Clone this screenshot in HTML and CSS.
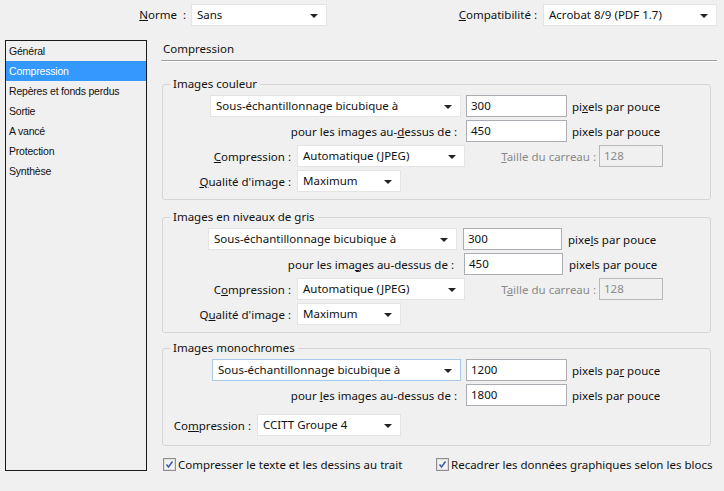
FILE: index.html
```html
<!DOCTYPE html>
<html lang="fr">
<head>
<meta charset="utf-8">
<title>Compression</title>
<link rel="stylesheet" href="styles.css">
</head>
<body>
<div class="topbar">
  <span class="lbl lbl-norme"><u>N</u>orme&nbsp; :</span>
  <div class="select sel-norme">Sans<span class="arrow"></span></div>
  <span class="lbl lbl-compat"><u>C</u>ompatibilité :</span>
  <div class="select sel-compat">Acrobat 8/9 (PDF 1.7)<span class="arrow"></span></div>
</div>
<div class="main">
  <ul class="sidebar">
    <li>Général</li>
    <li class="active">Compression</li>
    <li>Repères et fonds perdus</li>
    <li>Sortie</li>
    <li>A vancé</li>
    <li>Protection</li>
    <li>Synthèse</li>
  </ul>
  <div class="panel">
    <div class="panel-title">Compression</div>

    <fieldset class="group g1">
      <legend>Images couleur</legend>
      <div class="row r1">
        <div class="select sel-sample">Sous-échantillonnage bicubique à<span class="arrow"></span></div>
        <div class="input">300</div>
        <span class="unit">pi<u>x</u>els par pouce</span>
      </div>
      <div class="row r2">
        <span class="rlabel">pour les images au-<u>d</u>essus de :</span>
        <div class="input">450</div>
        <span class="unit">pixels par pouce</span>
      </div>
      <div class="row r3">
        <span class="flabel"><u>C</u>ompression :</span>
        <div class="select sel-comp">Automatique (JPEG)<span class="arrow"></span></div>
        <span class="dlabel"><u>T</u>aille du carreau :</span>
        <div class="input disabled">128</div>
      </div>
      <div class="row r4">
        <span class="flabel"><u>Q</u>ualité d'image :</span>
        <div class="select sel-qual">Maximum<span class="arrow"></span></div>
      </div>
    </fieldset>

    <fieldset class="group g2">
      <legend>Images en niveaux de gris</legend>
      <div class="row r1">
        <div class="select sel-sample">Sous-échantillonnage bicubique à<span class="arrow"></span></div>
        <div class="input">300</div>
        <span class="unit">pixe<u>l</u>s par pouce</span>
      </div>
      <div class="row r2">
        <span class="rlabel">pour les ima<u>g</u>es au-dessus de :</span>
        <div class="input">450</div>
        <span class="unit">pixels par pouce</span>
      </div>
      <div class="row r3">
        <span class="flabel">C<u>o</u>mpression :</span>
        <div class="select sel-comp">Automatique (JPEG)<span class="arrow"></span></div>
        <span class="dlabel">T<u>a</u>ille du carreau :</span>
        <div class="input disabled">128</div>
      </div>
      <div class="row r4">
        <span class="flabel">Q<u>u</u>alité d'image :</span>
        <div class="select sel-qual">Maximum<span class="arrow"></span></div>
      </div>
    </fieldset>

    <fieldset class="group g3">
      <legend>Images monochromes</legend>
      <div class="row r1">
        <div class="select sel-sample focus">Sous-échantillonnage bicubique à<span class="arrow"></span></div>
        <div class="input">1200</div>
        <span class="unit">pixels pa<u>r</u> pouce</span>
      </div>
      <div class="row r2">
        <span class="rlabel">pour <u>l</u>es images au-dessus de :</span>
        <div class="input">1800</div>
        <span class="unit">pixels par pouce</span>
      </div>
      <div class="row r3">
        <span class="flabel">Co<u>m</u>pression :</span>
        <div class="select sel-ccitt">CCITT Groupe 4<span class="arrow"></span></div>
      </div>
    </fieldset>

    <div class="checks">
      <label class="check check1">
        <svg class="box" width="13" height="13" viewBox="0 0 13 13"><rect x="0.5" y="0.5" width="12" height="12" fill="#fff" stroke="#8f8f8f"/><rect x="1.5" y="1.5" width="10" height="10" fill="#f4f4f4" stroke="#dedede"/><path d="M3.5 6.5 L5.5 9 L9.5 3.5" fill="none" stroke="#3a5fb0" stroke-width="1.6"/></svg>
        Compresser le texte et les dessins au trait
      </label>
      <label class="check check2">
        <svg class="box" width="13" height="13" viewBox="0 0 13 13"><rect x="0.5" y="0.5" width="12" height="12" fill="#fff" stroke="#8f8f8f"/><rect x="1.5" y="1.5" width="10" height="10" fill="#f4f4f4" stroke="#dedede"/><path d="M3.5 6.5 L5.5 9 L9.5 3.5" fill="none" stroke="#3a5fb0" stroke-width="1.6"/></svg>
        Recadrer les données graphiques selon les blocs
      </label>
    </div>
  </div>
</div>
</body>
</html>
```

FILE: styles.css
```css
* { box-sizing: border-box; }
html, body { margin: 0; padding: 0; }
body {
  background: #f0f0f0;
  font-family: "Noto Sans", "Open Sans", sans-serif;
  font-size: 11.5px;
  color: #111;
  width: 724px;
  height: 491px;
  overflow: hidden;
}
u { text-decoration: underline; text-underline-offset: 1px; }

.topbar {
  display: flex;
  align-items: center;
  height: 40px;
  padding-bottom: 11px;
}
.lbl { white-space: nowrap; }
.lbl-norme { width: 186px; text-align: right; }
.sel-norme { margin-left: 5px; width: 136px; }
.lbl-compat { width: 210px; text-align: right; }
.sel-compat { margin-left: 6px; width: 174px; }

.select {
  position: relative;
  height: 22px;
  line-height: 20px;
  background: #fff;
  border: 1px solid #e4e4e4;
  padding-left: 5px;
  white-space: nowrap;
}
.select.focus { border-color: #a9c9ea; }
.arrow {
  position: absolute;
  right: 8px;
  top: 9px;
  width: 0;
  height: 0;
  border-left: 4px solid transparent;
  border-right: 4px solid transparent;
  border-top: 4px solid #222;
}
.input {
  height: 22px;
  line-height: 20px;
  background: #fff;
  border: 1px solid #abadb3;
  padding-left: 4px;
  width: 101px;
}
.input.disabled {
  background: #f0f0f0;
  border-color: #b8b8b8;
  color: #8a8a8a;
  width: 64px;
}

.main { display: flex; align-items: flex-start; }
.sidebar {
  list-style: none;
  margin: 0 0 0 5px;
  padding: 0;
  width: 142px;
  height: 431px;
  border: 1px solid #1a1a1a;
  background: #f0f0f0;
  font-family: "Liberation Sans", sans-serif;
  font-size: 10.5px;
  letter-spacing: -0.2px;
}
.sidebar li {
  height: 20px;
  line-height: 20px;
  padding-left: 3px;
  color: #111;
}
.sidebar li.active { background: #3399ff; color: #fff; }

.panel { margin-left: 14px; width: 556px; }
.panel-title {
  height: 21px;
  line-height: 18px;
  padding-left: 2px;
  border-bottom: 1px solid #a0a0a0;
  box-shadow: 0 1px 0 #fff;
}

.group {
  margin: 0 0 0 1px;
  width: 549px;
  border: 1px solid #d5d5d5;
  border-radius: 3px;
  padding: 4px 0 7px 0;
  min-width: 0;
}
.group legend {
  margin-left: 7px;
  padding: 0 3px;
  line-height: 14px;
  height: 14px;
}
.g1 { margin-top: 16px; }
.g2 { margin-top: 10px; }
.g3 { margin-top: 8px; padding-bottom: 9px; }

.row {
  display: flex;
  align-items: center;
  gap: 5px;
  height: 22px;
  white-space: nowrap;
}
.row + .row { margin-top: 3px; }
.r1 { padding-left: 47px; }
.sel-sample { width: 251px; }
.rlabel { width: 298px; text-align: right; padding-right: 4px; }
.flabel { width: 129px; text-align: right; padding-right: 1px; }
.sel-comp { width: 168px; }
.sel-qual { width: 104px; }
.dlabel { margin-left: 27px; color: #8a8a8a; margin-right: -2px; width: 99px; text-align: right; }

.g2 .r1 { padding-left: 45px; }
.g2 .sel-sample { width: 249px; }
.g2 .r1, .g2 .r2 { gap: 6px; }
.g2 .rlabel { width: 295px; }
.g2 .r1 .input, .g2 .r2 .input { width: 99px; }

.g3 .r1 { padding-left: 49px; }
.g3 .sel-sample { width: 249px; }
.g3 .r3 { margin-top: 8px; }
.g3 .r3 .flabel { width: 89px; }
.sel-ccitt { width: 144px; }

.checks {
  display: flex;
  align-items: center;
  margin-top: 10px;
  height: 16px;
  white-space: nowrap;
}
.check { display: flex; align-items: center; gap: 2px; }
.check .box { flex: none; }
.check1 { margin-left: 2px; width: 273px; }
```
